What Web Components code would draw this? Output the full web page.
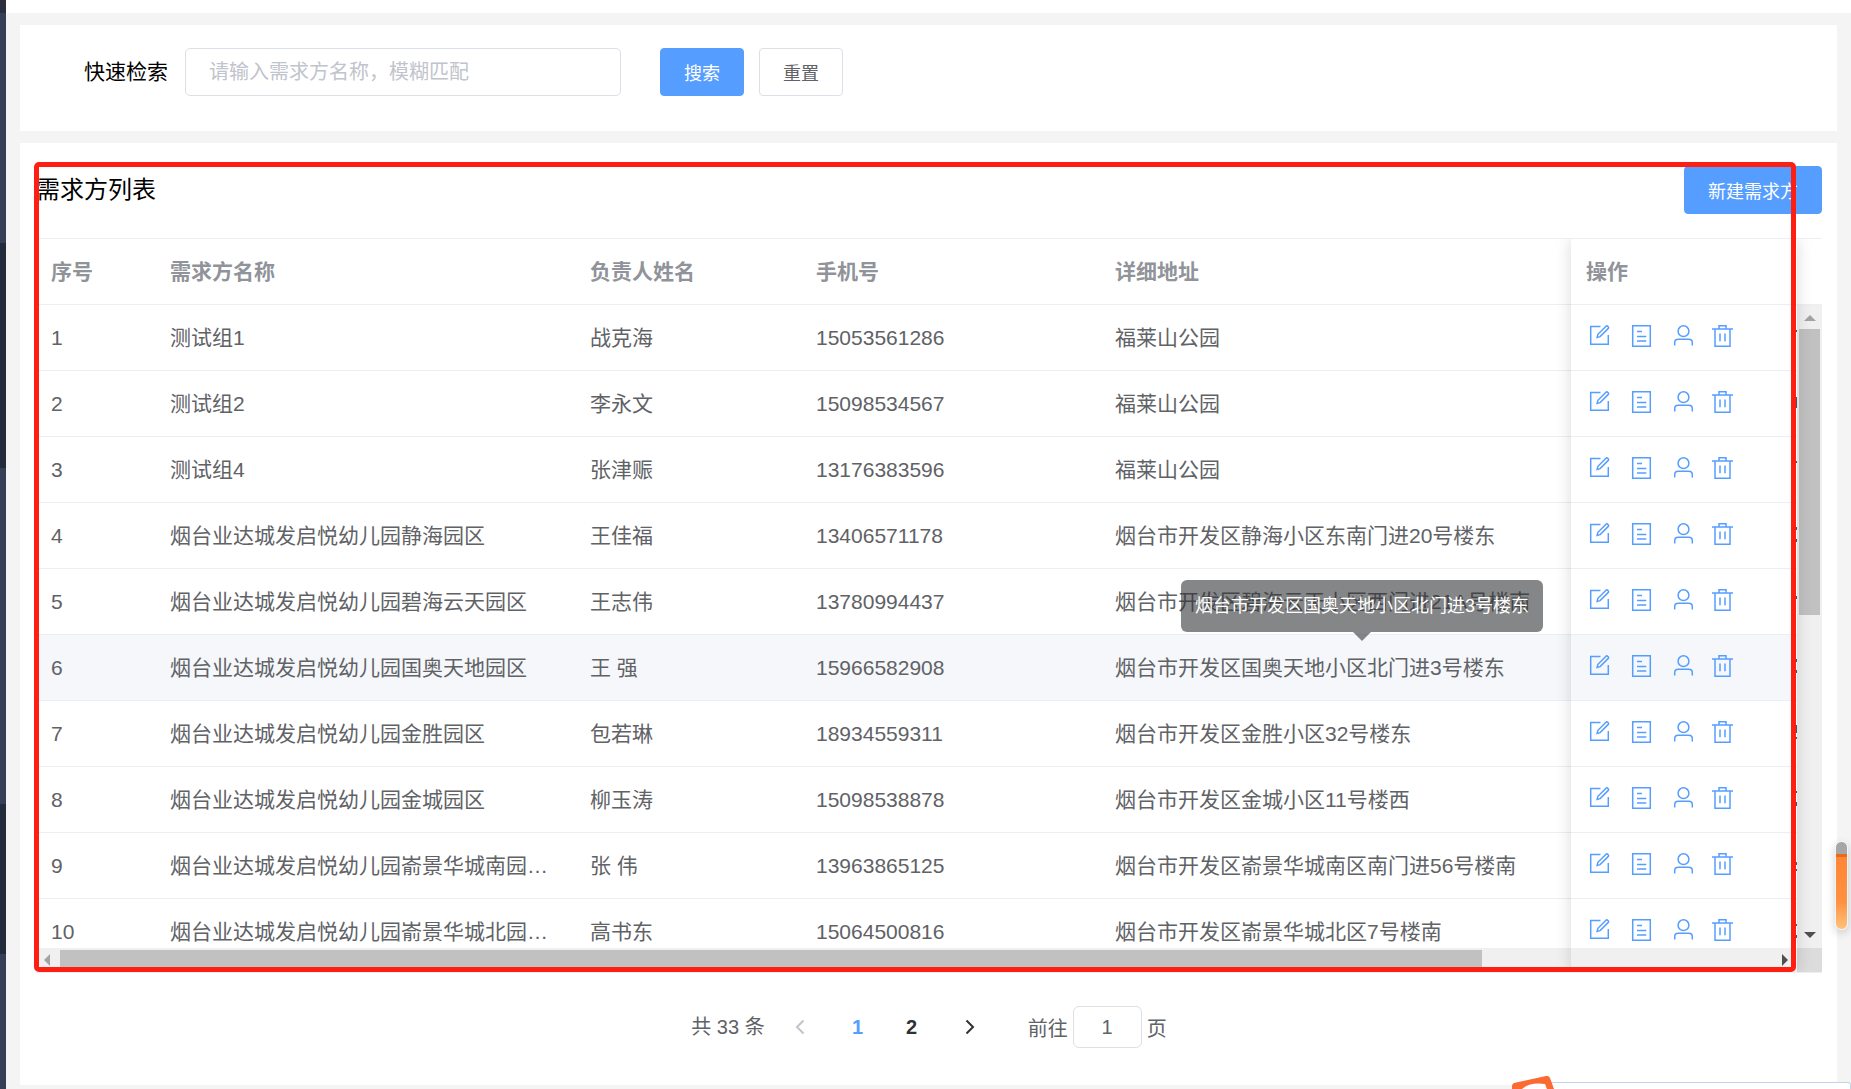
<!DOCTYPE html>
<html lang="zh-CN">
<head>
<meta charset="UTF-8">
<meta name="viewport" content="width=device-width, initial-scale=1.0">
<title>需求方列表</title>
<style>
  :root {
    --primary: #559eff;
    --text: #606266;
    --muted: #909399;
    --line: #ebeef5;
    --border: #dcdfe6;
  }

  * {
    box-sizing: border-box;
  }

  body {
    margin: 0;
    font-family: "Liberation Sans", "Noto Sans CJK SC", sans-serif;
    font-size: 21px;
    line-height: 30px;
    color: var(--text);
    background-color: #f4f4f4;
  }
</style>
</head>
<body>
<demand-app></demand-app>

<script>
const rows = [
  { name: '测试组1', person: '战克海', phone: '15053561286', address: '福莱山公园', ticks: [[25, 2]] },
  { name: '测试组2', person: '李永文', phone: '15098534567', address: '福莱山公园', ticks: [[26, 11]] },
  { name: '测试组4', person: '张津赈', phone: '13176383596', address: '福莱山公园', ticks: [[24, 2]] },
  { name: '烟台业达城发启悦幼儿园静海园区', person: '王佳福', phone: '13406571178', address: '烟台市开发区静海小区东南门进20号楼东', ticks: [[24, 3], [36, 3]] },
  { name: '烟台业达城发启悦幼儿园碧海云天园区', person: '王志伟', phone: '13780994437', address: '烟台市开发区碧海云天小区西门进21A号楼南', ticks: [[27, 3]] },
  { name: '烟台业达城发启悦幼儿园国奥天地园区', person: '王 强', phone: '15966582908', address: '烟台市开发区国奥天地小区北门进3号楼东', ticks: [[24, 3], [35, 3]], active: true },
  { name: '烟台业达城发启悦幼儿园金胜园区', person: '包若琳', phone: '18934559311', address: '烟台市开发区金胜小区32号楼东', ticks: [[24, 8], [36, 2]] },
  { name: '烟台业达城发启悦幼儿园金城园区', person: '柳玉涛', phone: '15098538878', address: '烟台市开发区金城小区11号楼西', ticks: [[24, 2], [35, 4]] },
  { name: '烟台业达城发启悦幼儿园嵛景华城南园…', person: '张 伟', phone: '13963865125', address: '烟台市开发区嵛景华城南区南门进56号楼南', ticks: [[29, 3], [36, 2]] },
  { name: '烟台业达城发启悦幼儿园嵛景华城北园…', person: '高书东', phone: '15064500816', address: '烟台市开发区嵛景华城北区7号楼南', ticks: [[25, 2], [36, 3]] }
];

const icons = {
  edit: ['编辑', '<path d="M14.5 3.5H4.7v17.8h17.6V12"/><path d="M20 3.2c1-1 3.4 1 2.3 2.2l-8.2 8.2-3 .8.8-3.1z"/>'],
  detail: ['详情', '<path d="M4.7 2.7h17.6v20.6H4.7zM9 8.6h5M9 13.5h9.3M9 18h9.3"/>'],
  user: ['人员', '<circle cx="13.5" cy="8.2" r="5.4"/><path d="M4.7 22.5v-2.8q0-3.4 3.5-3.4h10.6q3.5 0 3.5 3.4v2.8"/>'],
  remove: ['删除', '<path d="M0 6h21M3 6v17.3h15V6M7 5.5V2.7h7v2.8M8 10.5v7.8M13 10.5v7.8"/>']
};

class BaseElement extends HTMLElement {
  constructor() {
    super();
    this.attachShadow({ mode: 'open' });
    this.shadowRoot.innerHTML = `
      <style>
        * {
          box-sizing: border-box;
        }

        h1,
        button,
        input {
          margin: 0;
          padding: 0;
          font-family: inherit;
        }
      </style>
      ${this.render()}
    `;
  }
}

class AppButton extends BaseElement {
  render() {
    return `
      <style>
        :host {
          display: block;
        }

        button {
          display: block;
          height: 48px;
          padding: 0 23px;
          border: 1px solid var(--border);
          border-radius: 4px;
          background-color: white;
          color: var(--text);
          font-size: 18px;
          white-space: nowrap;
          cursor: pointer;
        }

        :host([type="primary"]) button {
          border-color: var(--primary);
          background-color: var(--primary);
          color: white;
        }
      </style>
      <button type="button"><slot></slot></button>
    `;
  }
}

class IconButton extends BaseElement {
  static observedAttributes = ['icon'];

  render() {
    return `
      <style>
        :host {
          display: block;
        }

        button {
          display: block;
          width: 24px;
          height: 24px;
          border: none;
          background: none;
          color: var(--primary);
          cursor: pointer;
        }

        svg {
          display: block;
          overflow: visible;
          fill: none;
          stroke: currentColor;
          stroke-width: 1.5;
        }
      </style>
      <button type="button"></button>
    `;
  }

  attributeChangedCallback(attribute, oldValue, value) {
    const [label, shapes] = icons[value];
    const button = this.shadowRoot.querySelector('button');
    button.setAttribute('aria-label', label);
    button.innerHTML = `<svg width="24" height="24" viewBox="0 0 24 24">${shapes}</svg>`;
  }
}

class SideRail extends BaseElement {
  render() {
    return `
      <style>
        :host {
          display: block;
          background: linear-gradient(#2c2e3d 13px, #344058 13px 243px, #222c3c 243px 468px, #344058 468px 804px, #222c3c 804px 954px, #344058 954px);
        }
      </style>
    `;
  }
}

class SearchPanel extends BaseElement {
  render() {
    return `
      <style>
        :host {
          display: block;
          padding: 23px 64px 35px;
          background-color: white;
        }

        form {
          display: flex;
          align-items: center;
        }

        label {
          margin-right: 17px;
          color: black;
        }

        input {
          width: 436px;
          height: 48px;
          margin-right: 39px;
          padding: 0 23px;
          border: 1px solid var(--border);
          border-radius: 5px;
          outline: none;
          color: var(--text);
          font-size: 20px;
        }

        input::placeholder {
          color: #c0c4cc;
        }

        app-button + app-button {
          margin-left: 15px;
        }
      </style>
      <form>
        <label for="keyword">快速检索</label>
        <input id="keyword" type="text" placeholder="请输入需求方名称，模糊匹配">
        <app-button type="primary">搜索</app-button>
        <app-button>重置</app-button>
      </form>
    `;
  }
}

class TextTooltip extends BaseElement {
  render() {
    return `
      <style>
        :host {
          display: block;
          padding: 0 14px;
          border-radius: 6px;
          background-color: rgba(48, 49, 51, .59);
          color: white;
          font-size: 18px;
          line-height: 52px;
          white-space: nowrap;
        }

        :host::after {
          content: "";
          position: absolute;
          top: 100%;
          left: 50%;
          margin-left: -9px;
          border: 9px solid transparent;
          border-top-color: rgba(48, 49, 51, .59);
          border-bottom: none;
        }
      </style>
      <slot></slot>
    `;
  }
}

class DemandTable extends BaseElement {
  renderRow(row, index) {
    return `
      <tr class="${row.active ? 'active' : ''}">
        <td>${index + 1}</td>
        <td>${row.name}</td>
        <td>${row.person}</td>
        <td>${row.phone}</td>
        <td>${row.address}${row.active ? `<text-tooltip role="tooltip">${row.address}</text-tooltip>` : ''}</td>
        <td>
          <div class="actions">
            ${Object.keys(icons).map(icon => `<icon-button icon="${icon}"></icon-button>`).join('')}
          </div>
          ${row.ticks.map(([top, height]) => `<i style="top: ${top}px; height: ${height}px"></i>`).join('')}
        </td>
      </tr>
    `;
  }

  render() {
    return `
      <style>
        :host {
          position: relative;
          display: grid;
          grid-template-columns: minmax(0, 1fr) 25px;
          grid-template-rows: minmax(0, 1fr) 24px;
          overflow: hidden;
          border-top: 1px solid var(--line);
          border-bottom: 1px solid var(--line);
        }

        .viewport {
          overflow: hidden;
        }

        table {
          width: 100%;
          table-layout: fixed;
          border-spacing: 0;
        }

        th,
        td {
          position: relative;
          height: 66px;
          padding: 0 15px;
          border-bottom: 1px solid var(--line);
          text-align: left;
          white-space: nowrap;
        }

        th {
          color: var(--muted);
        }

        .index { width: 119px; }
        .name { width: 420px; }
        .person { width: 226px; }
        .phone { width: 299px; }
        .operate { width: 226px; }

        .active td {
          background-color: #f5f7fa;
        }

        .actions {
          display: flex;
          gap: 18px;
          padding-bottom: 5px;
        }

        /* edge of the column hidden behind the fixed one */
        i {
          position: absolute;
          right: 0;
          width: 1px;
          background-color: #46536a;
        }

        text-tooltip {
          position: absolute;
          bottom: calc(100% + 3px);
          left: 81px;
          z-index: 2;
        }

        .fixed-shadow {
          position: absolute;
          top: 0;
          right: 25px;
          bottom: 0;
          width: 226px;
          z-index: 1;
          box-shadow: 0 0 15px rgba(0, 0, 0, .15);
          pointer-events: none;
        }

        .bar {
          display: flex;
          align-items: center;
          background-color: #f0f0f0;
        }

        .bar.vertical {
          flex-direction: column;
          margin-top: 65px;
          border-top: 1px solid var(--line);
        }

        .track {
          flex: 1;
        }

        .thumb {
          background-color: #c1c1c1;
        }

        .vertical .track { width: 21px; }
        .vertical .thumb { height: 48%; }
        .horizontal .track { height: 20px; }
        .horizontal .thumb { width: 83%; height: 100%; }

        .arrow {
          width: 24px;
          height: 24px;
          fill: #505050;
        }

        .arrow.disabled {
          fill: #a3a3a3;
        }

        .corner {
          background-color: #dcdcdc;
        }
      </style>
      <div class="viewport">
        <table>
          <colgroup>
            <col class="index"><col class="name"><col class="person"><col class="phone"><col><col class="operate">
          </colgroup>
          <thead>
            <tr><th>序号</th><th>需求方名称</th><th>负责人姓名</th><th>手机号</th><th>详细地址</th><th>操作</th></tr>
          </thead>
          <tbody>${rows.map((row, index) => this.renderRow(row, index)).join('')}</tbody>
        </table>
      </div>
      <div class="bar vertical">
        <svg class="arrow disabled" viewBox="0 0 24 24"><path d="M6 16h12l-6-6z"/></svg>
        <div class="track"><div class="thumb"></div></div>
        <svg class="arrow" viewBox="0 0 24 24"><path d="M6 8h12l-6 6z"/></svg>
      </div>
      <div class="bar horizontal">
        <svg class="arrow disabled" viewBox="0 0 24 24"><path d="M14 6v12l-6-6z"/></svg>
        <div class="track"><div class="thumb"></div></div>
        <svg class="arrow" viewBox="0 0 24 24"><path d="M9 6v12l6-6z"/></svg>
      </div>
      <div class="corner"></div>
      <div class="fixed-shadow"></div>
    `;
  }
}

class PagePagination extends BaseElement {
  render() {
    return `
      <style>
        :host {
          display: flex;
          justify-content: center;
          align-items: center;
          gap: 12px;
          font-size: 20px;
        }

        .pages {
          display: flex;
          gap: 8px;
        }

        button {
          display: grid;
          place-items: center;
          width: 46px;
          height: 42px;
          border: none;
          background: none;
          color: #303133;
          font-size: 20px;
          font-weight: bold;
          cursor: pointer;
        }

        button:disabled {
          color: #c0c4cc;
        }

        button[aria-current] {
          color: var(--primary);
        }

        svg {
          fill: none;
          stroke: currentColor;
          stroke-width: 2;
        }

        .jump {
          display: flex;
          align-items: center;
          gap: 5px;
          margin-left: 23px;
        }

        label,
        .unit {
          padding-top: 3px;
        }

        input {
          width: 69px;
          height: 42px;
          border: 1px solid var(--border);
          border-radius: 6px;
          outline: none;
          color: var(--text);
          font-size: 20px;
          text-align: center;
        }
      </style>
      <span>共 33 条</span>
      <button type="button" aria-label="上一页" disabled>
        <svg width="16" height="16" viewBox="0 0 16 16"><path d="M11.5 1.5L5 8l6.5 6.5"/></svg>
      </button>
      <div class="pages">
        <button type="button" aria-current="page">1</button>
        <button type="button">2</button>
      </div>
      <button type="button" aria-label="下一页">
        <svg width="16" height="16" viewBox="0 0 16 16"><path d="M4.5 1.5L11 8l-6.5 6.5"/></svg>
      </button>
      <div class="jump">
        <label for="page">前往</label>
        <input id="page" type="text" value="1">
        <span class="unit">页</span>
      </div>
    `;
  }
}

class ListPanel extends BaseElement {
  render() {
    return `
      <style>
        :host {
          position: relative;
          display: flex;
          flex-direction: column;
          padding: 23px 15px 37px 16px;
          background-color: white;
        }

        header {
          display: flex;
          justify-content: space-between;
          align-items: center;
          margin-bottom: 24px;
        }

        h1 {
          color: black;
          font-size: 24px;
          font-weight: normal;
        }

        demand-table {
          flex: 1;
          min-height: 0;
        }

        page-pagination {
          margin-top: 33px;
        }

        .marker {
          position: absolute;
          inset: 19px 41px 113px 14px;
          z-index: 3;
          border: 5px solid #ff1f12;
          border-radius: 5px;
          pointer-events: none;
        }
      </style>
      <header>
        <h1>需求方列表</h1>
        <app-button type="primary">新建需求方</app-button>
      </header>
      <demand-table></demand-table>
      <page-pagination></page-pagination>
      <div class="marker"></div>
    `;
  }
}

class FloatingGadgets extends BaseElement {
  render() {
    return `
      <style>
        :host {
          display: contents;
        }

        .gauge {
          position: fixed;
          top: 841px;
          right: 3px;
          width: 13px;
          height: 89px;
          border: 1px solid #f4f4f4;
          border-radius: 7px;
          background: linear-gradient(#a6a6a6 12px, #ea6b13 12px 15px, #ff8636 15px, #ff9142 60px, #ffc27c);
          box-shadow: 0 3px 10px rgba(0, 0, 0, .18);
        }

        .toolbar {
          position: fixed;
          right: 0;
          bottom: 0;
          width: 300px;
          height: 7px;
          border: 1px solid #c5d3e6;
          border-bottom: none;
          border-radius: 0 3px 0 0;
          background-color: white;
        }

        svg {
          position: fixed;
          right: 297px;
          bottom: 0;
          width: 42px;
          height: 13px;
        }
      </style>
      <div class="gauge"></div>
      <div class="toolbar"></div>
      <svg viewBox="0 0 42 13">
        <path fill="#fff" d="M8 13L14 9L38 7L39 13z"/>
        <path fill="#fb6a33" d="M0 13V10q0-2 2-3L34 0q3-.5 4 2l4 11h-7l-2-5Q18 6 10 13z"/>
      </svg>
    `;
  }
}

class DemandApp extends BaseElement {
  render() {
    return `
      <style>
        :host {
          display: grid;
          grid-template-columns: 6px minmax(0, 1fr);
          grid-template-rows: minmax(0, 1fr);
          height: 100vh;
        }

        .page {
          display: flex;
          flex-direction: column;
          min-height: 0;
        }

        .topbar {
          height: 13px;
          background-color: white;
        }

        main {
          flex: 1;
          display: flex;
          flex-direction: column;
          gap: 12px;
          min-height: 0;
          padding: 12px 14px 4px;
        }

        list-panel {
          flex: 1;
          min-height: 0;
        }
      </style>
      <side-rail></side-rail>
      <div class="page">
        <div class="topbar"></div>
        <main>
          <search-panel></search-panel>
          <list-panel></list-panel>
        </main>
      </div>
      <floating-gadgets></floating-gadgets>
    `;
  }
}

customElements.define('app-button', AppButton);
customElements.define('icon-button', IconButton);
customElements.define('side-rail', SideRail);
customElements.define('search-panel', SearchPanel);
customElements.define('text-tooltip', TextTooltip);
customElements.define('demand-table', DemandTable);
customElements.define('page-pagination', PagePagination);
customElements.define('list-panel', ListPanel);
customElements.define('floating-gadgets', FloatingGadgets);
customElements.define('demand-app', DemandApp);
</script>
</body>
</html>
